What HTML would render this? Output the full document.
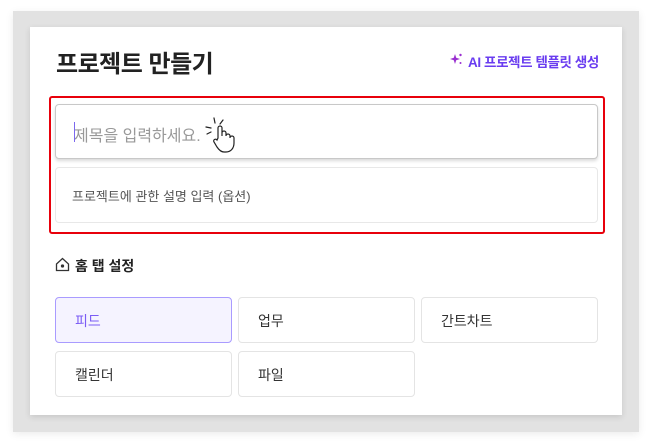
<!DOCTYPE html>
<html><head><meta charset="utf-8"><style>
*{box-sizing:border-box;margin:0;padding:0}
body{width:652px;height:448px;background:#fff;font-family:"Liberation Sans","Noto Sans CJK KR",sans-serif;position:relative;overflow:hidden}
.gray{position:absolute;left:13px;top:11px;width:626px;height:421px;background:#e2e2e2;box-shadow:0 2px 8px rgba(0,0,0,.08)}
.card{position:absolute;left:30px;top:27px;width:592px;height:388px;background:#fff;box-shadow:0 2px 6px rgba(0,0,0,.12)}
.abs{position:absolute}
.title{left:56px;top:44px;font-size:24px;font-weight:700;color:#222;letter-spacing:-0.5px}
.ai{top:51px;font-size:13.5px;color:#6a3df0;font-weight:700;letter-spacing:-0.4px}
.red{left:49px;top:96px;width:556px;height:138px;border:2px solid #e8000b;border-radius:3px}
.inp{left:55px;top:104px;width:543px;height:55px;border:1px solid #c8c8c8;border-radius:4px;box-shadow:0 2px 3px rgba(0,0,0,.15);background:#fff}
.ph{left:74px;top:122px;font-size:16px;color:#999}
.caret{left:74px;top:122px;width:1px;height:20px;background:#7b68ee}
.desc{left:55px;top:167px;width:543px;height:56px;border:1px solid #e8e8e8;border-radius:4px}
.dph{left:72px;top:186px;font-size:13px;color:#555}
.home{left:55px;top:256px;font-size:14px;font-weight:700;color:#222}
.b{position:absolute;width:177px;height:46px;border:1px solid #e4e4e4;border-radius:4px;font-size:14px;color:#333;padding:13px 0 0 19px}
.sel{background:#f5f3ff;border-color:#a99bff;color:#7b5cf5}
</style></head><body>
<div class="gray"></div>
<div class="card"></div>
<div class="abs title">프로젝트 만들기</div>
<svg class="abs" style="left:449px;top:52px" width="14" height="14" viewBox="0 0 14 14" fill="#9a2fd0"><path d="M6 2L7.2 5.8 11 7 7.2 8.2 6 12 4.8 8.2 1 7 4.8 5.8z"/><circle cx="11.5" cy="3" r="1.2"/><circle cx="11.5" cy="11" r="1"/></svg>
<div class="abs ai" style="left:468px">AI 프로젝트 템플릿 생성</div>
<div class="abs red"></div>
<div class="abs inp"></div>
<div class="abs ph">제목을 입력하세요.</div>
<div class="abs caret"></div>
<svg class="abs" style="left:201px;top:115px" width="40" height="42" viewBox="0 0 40 42" fill="none" stroke="#222" stroke-width="1.2" stroke-linecap="round">
<path d="M13 3l1 5M22 5l-3 4M5 12l5 1M6 19l4-2"/>
<path d="M17 23V13a2 2 0 0 1 4 0v8v-3a2 2 0 0 1 4 0v3a2 2 0 0 1 4 0v2a2 2 0 0 1 4 0v5c0 5-3 9-8 9h-2c-3 0-5-2-7-5l-3-5a1.5 1.5 0 0 1 3-2z" fill="#fff"/>
</svg>
<div class="abs desc"></div>
<div class="abs dph">프로젝트에 관한 설명 입력 (옵션)</div>
<svg class="abs" style="left:55px;top:257px" width="15" height="15" viewBox="0 0 15 15" fill="none" stroke="#333" stroke-width="1.3"><path d="M1.5 7L7.5 1.5 13.5 7V13.5H1.5z"/><circle cx="7.5" cy="9" r="1" fill="#333"/></svg>
<div class="abs home" style="left:75px">홈 탭 설정</div>
<div class="b sel" style="left:55px;top:297px">피드</div>
<div class="b" style="left:238px;top:297px">업무</div>
<div class="b" style="left:421px;top:297px">간트차트</div>
<div class="b" style="left:55px;top:351px">캘린더</div>
<div class="b" style="left:238px;top:351px">파일</div>
</body></html>
